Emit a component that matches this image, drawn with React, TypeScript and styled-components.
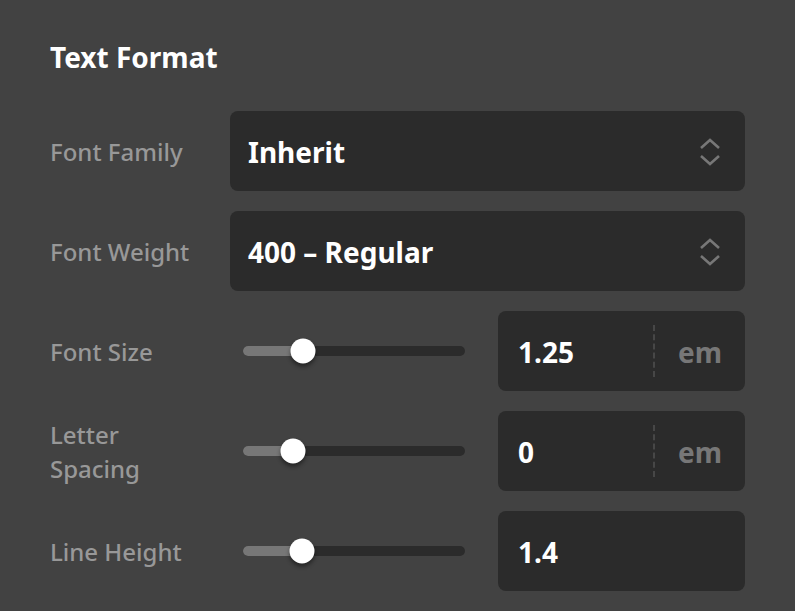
import React from "react";
import styled, { createGlobalStyle } from "styled-components";

const GlobalStyle = createGlobalStyle`
  html, body {
    margin: 0;
    padding: 0;
    background: #424242;
  }
  body {
    font-family: "Noto Sans", "Open Sans", sans-serif;
  }
`;

const Panel = styled.div`
  box-sizing: border-box;
  width: 795px;
  min-height: 611px;
  padding: 38px 50px 20px;
  background: #424242;
`;

const Heading = styled.h2`
  margin: 0 0 35px;
  font-size: 28px;
  line-height: 38px;
  font-weight: 700;
  color: #ffffff;
`;

const Rows = styled.div`
  display: flex;
  flex-direction: column;
  gap: 20px;
`;

const Row = styled.div`
  display: flex;
  align-items: center;
  gap: 20px;
  height: 80px;
`;

const Label = styled.label`
  flex: 0 0 160px;
  padding-top: 2px;
  font-size: 24px;
  line-height: 34px;
  font-weight: 500;
  color: #989898;
`;

const Box = styled.div`
  box-sizing: border-box;
  height: 80px;
  border-radius: 8px;
  background: #2b2b2b;
  display: flex;
  align-items: center;
  color: #ffffff;
  font-size: 28px;
  font-weight: 700;
`;

const SelectBox = styled(Box)`
  flex: 1;
  padding: 2px 24px 0 18px;
  justify-content: space-between;
`;

const Controls = styled.div`
  flex: 1;
  display: flex;
  align-items: center;
  gap: 20px;
`;

const SliderWrap = styled.div`
  flex: 1 1 0;
  padding: 0 13px;
`;

const Track = styled.div`
  position: relative;
  height: 10px;
  border-radius: 5px;
  background: #2b2b2b;
`;

const Fill = styled.div`
  height: 100%;
  border-radius: 5px 0 0 5px;
  background: #777777;
`;

const Thumb = styled.div`
  position: absolute;
  top: 50%;
  width: 25px;
  height: 25px;
  border-radius: 50%;
  background: #ffffff;
  transform: translate(-50%, -50%);
  box-shadow: 0 3px 4px rgba(0, 0, 0, 0.45);
`;

const ValueBox = styled(Box)`
  flex: 0 0 247px;
  padding-left: 20px;
`;

const Value = styled.span`
  flex: 1;
  padding-top: 2px;
`;

const Unit = styled.span`
  align-self: stretch;
  margin: 14px 0;
  width: 90px;
  padding-top: 2px;
  border-left: 2px dashed #474747;
  display: flex;
  align-items: center;
  justify-content: center;
  color: #777777;
`;

const Chevrons = () => (
  <svg width="22" height="28" viewBox="0 0 22 28" fill="none">
    <path
      d="M2 10 L11 2 L20 10 M2 18 L11 26 L20 18"
      stroke="#777777"
      strokeWidth="2.6"
      strokeLinecap="butt"
      strokeLinejoin="miter"
    />
  </svg>
);

const Slider = ({ percent }: { percent: number }) => (
  <SliderWrap>
    <Track>
      <Fill style={{ width: `${percent}%` }} />
      <Thumb style={{ left: `${percent}%` }} />
    </Track>
  </SliderWrap>
);

const selects = [
  { label: "Font Family", value: "Inherit" },
  { label: "Font Weight", value: "400 – Regular" },
];

const numbers = [
  { label: "Font Size", value: "1.25", unit: "em", percent: 27 },
  { label: "Letter Spacing", value: "0", unit: "em", percent: 22.5 },
  { label: "Line Height", value: "1.4", unit: "", percent: 26.5 },
];

export default function App() {
  return (
    <>
      <GlobalStyle />
      <Panel>
        <Heading>Text Format</Heading>
        <Rows>
          {selects.map((s) => (
            <Row key={s.label}>
              <Label>{s.label}</Label>
              <SelectBox>
                <span>{s.value}</span>
                <Chevrons />
              </SelectBox>
            </Row>
          ))}
          {numbers.map((n) => (
            <Row key={n.label}>
              <Label>{n.label}</Label>
              <Controls>
                <Slider percent={n.percent} />
                <ValueBox>
                  <Value>{n.value}</Value>
                  {n.unit && <Unit>{n.unit}</Unit>}
                </ValueBox>
              </Controls>
            </Row>
          ))}
        </Rows>
      </Panel>
    </>
  );
}
